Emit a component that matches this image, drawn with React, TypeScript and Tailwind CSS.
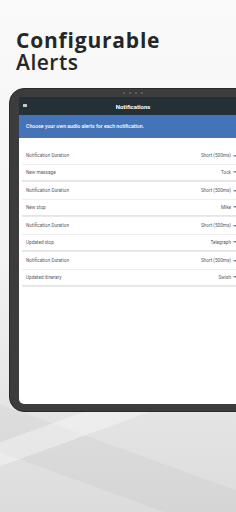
import React from "react";

const groups = [
  { name: "New message", value: "Tock" },
  { name: "New stop", value: "Mike" },
  { name: "Updated stop", value: "Telegraph" },
  { name: "Updated itinerary", value: "Swish" },
];

function Caret() {
  return <span className="ml-[2px] inline-block w-0 h-0 border-l-[2px] border-r-[2px] border-t-[2px] border-l-transparent border-r-transparent border-t-[#888]" />;
}

export default function App() {
  return (
    <div
      className="w-[236px] h-[512px] overflow-hidden bg-[linear-gradient(160deg,transparent_74%,rgba(255,255,255,0.35)_74%,rgba(255,255,255,0.35)_78%,transparent_78%),linear-gradient(200deg,transparent_82%,rgba(0,0,0,0.03)_82%,rgba(0,0,0,0.03)_90%,transparent_90%),linear-gradient(180deg,#fafafa_0%,#f3f3f3_50%,#e6e6e6_76%,#dcdcdc_100%)] font-['Open_Sans',sans-serif]"
    >
      <h1 className="pt-[29px] pl-[16px] text-[#262626] text-[21px] leading-[22px] font-semibold tracking-[0.5px]">
        <span className="font-bold tracking-[0.8px]">Configurable</span>
        <br />
        Alerts
      </h1>

      <div className="mt-[15px] ml-[9px] w-[248px] h-[324px] bg-[#3c3c3c] rounded-[15px] border border-[#2a2a2a] flex flex-col px-[9px] pb-[7px]">
        <div className="h-[8px] flex items-center justify-center gap-[4px]">
          <span className="w-[2px] h-[2px] rounded-full bg-[#666]" />
          <span className="w-[2px] h-[2px] rounded-full bg-[#666]" />
          <span className="w-[2px] h-[2px] rounded-full bg-[#666]" />
          <span className="w-[2px] h-[2px] rounded-full bg-[#666]" />
        </div>
        <div className="flex-1 bg-white rounded-[5px] rounded-t-none overflow-hidden flex flex-col font-['Roboto',sans-serif]">
          <div className="h-[18px] bg-[#243036] relative flex items-center justify-center">
            <span className="absolute left-[4px] top-[7px] w-[4px] h-[3px] bg-[#c8c8c8] rounded-[0.5px]" />
            <span className="text-white text-[6px] font-bold">Notifications</span>
          </div>
          <div className="h-[23px] bg-[#4573b8] flex items-center pl-[7px]">
            <span className="text-white text-[5.2px] font-medium">Choose your own audio alerts for each notification.</span>
          </div>
          <div className="pt-[10px] pl-[3px] pr-[3px] flex flex-col">
            {groups.map((g) => (
              <div key={g.name} className="flex flex-col mb-[1px]">
                <div className="h-[16px] flex items-center justify-between pl-[4px] pr-[7px] text-[4.7px] text-[#5a5a5a]">
                  <span>Notification Duration</span>
                  <span className="flex items-center">
                    Short (500ms)
                    <Caret />
                  </span>
                </div>
                <div className="h-[1px] bg-[#efefef]" />
                <div className="h-[15px] flex items-center justify-between pl-[4px] pr-[7px] text-[4.7px] text-[#5a5a5a]">
                  <span>{g.name}</span>
                  <span className="flex items-center">
                    {g.value}
                    <Caret />
                  </span>
                </div>
                <div className="h-[2px] bg-[linear-gradient(180deg,#e2e2e2,#ececec)]" />
              </div>
            ))}
          </div>
        </div>
      </div>
    </div>
  );
}
